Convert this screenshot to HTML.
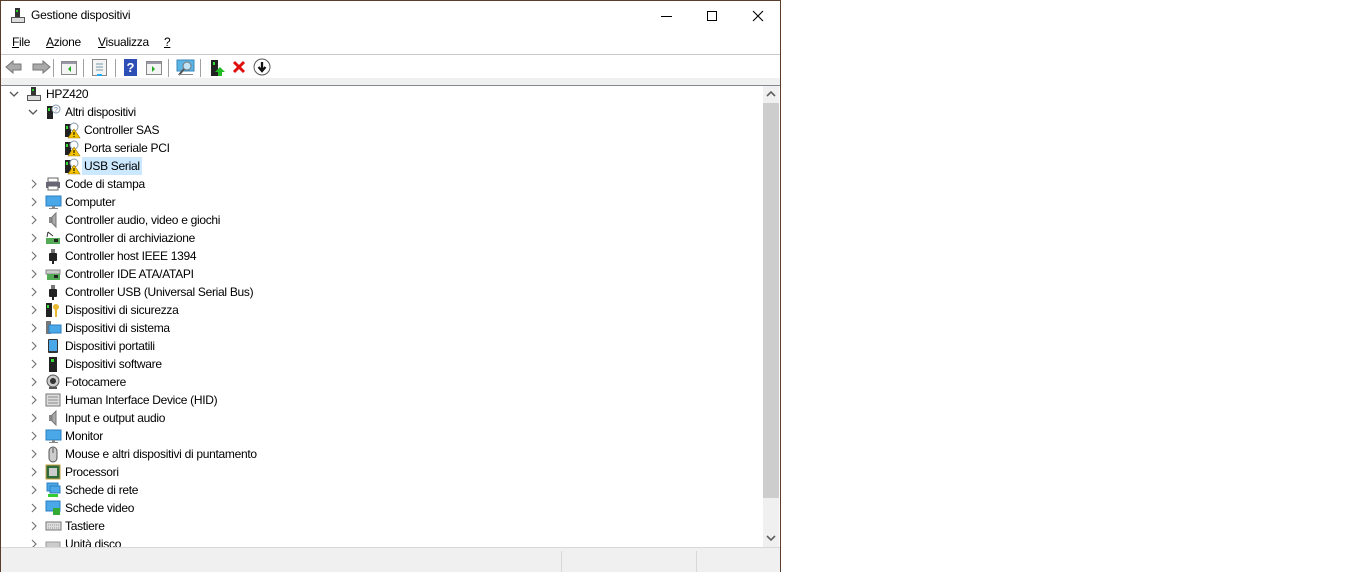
<!DOCTYPE html>
<html><head><meta charset="utf-8"><style>
*{margin:0;padding:0;box-sizing:border-box}
body{width:1365px;height:572px;background:#fff;position:relative;overflow:hidden;font-family:"Liberation Sans",sans-serif;font-size:12px;color:#000}
#win{position:absolute;left:0;top:0;width:781px;height:572px;border:1px solid #5b3d2b;border-bottom:none;background:#fff;overflow:hidden}
.abs{position:absolute}
.menu span{position:absolute;top:34px;font-size:12px;letter-spacing:-0.3px}
.row{position:absolute;height:18px;line-height:18px;white-space:nowrap;letter-spacing:-0.3px}
.chev{position:absolute;top:0;color:#777;font-size:11px}
.sep{position:absolute;top:58px;width:1px;height:18px;background:#a0a0a0}
</style></head><body>
<div id="win">
 <svg class="abs" style="left:9px;top:6px" width="16" height="18"><rect x="5" y="1" width="5" height="9" fill="#333"/><rect x="6" y="3" width="2" height="2" fill="#2c2"/><rect x="1" y="10" width="14" height="6" fill="#555"/><rect x="2" y="11" width="12" height="4" fill="#ddd"/></svg>
 <div class="abs" style="left:30px;top:7px;font-size:12px;letter-spacing:-0.2px">Gestione dispositivi</div>
 <div class="abs" style="left:660px;top:15px;width:11px;height:1px;background:#000"></div>
 <div class="abs" style="left:706px;top:10px;width:10px;height:10px;border:1px solid #000"></div>
 <svg class="abs" style="left:751px;top:9px" width="12" height="12"><path d="M1 1L11 11M11 1L1 11" stroke="#000" stroke-width="1.1"/></svg>
 <div class="menu"><span style="left:11px"><u>F</u>ile</span><span style="left:45px"><u>A</u>zione</span><span style="left:97px"><u>V</u>isualizza</span><span style="left:163px"><u>?</u></span></div>
 <div class="abs" style="left:0;top:53px;width:780px;height:1px;background:#c8c8c8"></div>
 <svg class="abs" style="left:4px;top:58px" width="46" height="16"><path d="M1 8L8 2V5H16V11H8V14Z" fill="#aaa" stroke="#777"/><path d="M45 8L38 2V5H28V11H38V14Z" fill="#aaa" stroke="#777"/></svg>
 <div class="sep" style="left:52px"></div>
 <svg class="abs" style="left:60px;top:59px" width="17" height="16"><rect x=".5" y="1.5" width="15" height="13" fill="#f4f4f4" stroke="#888"/><rect x="1" y="2" width="14" height="2" fill="#99a"/><path d="M10 6L7 9L10 12Z" fill="#2a2"/></svg>
 <div class="sep" style="left:82px"></div>
 <svg class="abs" style="left:91px;top:58px" width="16" height="18"><rect x=".5" y=".5" width="14" height="16" fill="#f4f4f4" stroke="#888"/><path d="M4 5H11M4 8H11M4 11H11" stroke="#79a"/><rect x="5" y="15" width="5" height="2" fill="#2af"/></svg>
 <div class="sep" style="left:114px"></div>
 <div class="abs" style="left:123px;top:58px;width:13px;height:17px;background:#2d4fb5;color:#fff;font-weight:bold;font-size:13px;text-align:center;line-height:17px">?</div>
 <svg class="abs" style="left:145px;top:59px" width="17" height="16"><rect x=".5" y="1.5" width="15" height="13" fill="#f4f4f4" stroke="#888"/><rect x="1" y="2" width="14" height="2" fill="#99a"/><path d="M6 6L9 9L6 12Z" fill="#2a2"/></svg>
 <div class="sep" style="left:167px"></div>
 <svg class="abs" style="left:175px;top:58px" width="19" height="18"><rect x="1" y="1" width="17" height="11" fill="#5ab4e6" stroke="#3a86b8"/><circle cx="11" cy="7" r="4" fill="#bfe3f7" stroke="#777"/><path d="M8 10L3 16" stroke="#555" stroke-width="2"/><rect x="2" y="15" width="15" height="1" fill="#888"/></svg>
 <div class="sep" style="left:199px"></div>
 <svg class="abs" style="left:208px;top:58px" width="16" height="18"><rect x="2" y="1" width="7" height="16" fill="#222"/><rect x="4" y="3" width="2" height="3" fill="#3d3"/><path d="M11 8L16 13H13V17H9V13H6Z" fill="#2b2"/></svg>
 <svg class="abs" style="left:231px;top:59px" width="14" height="14"><path d="M2 2L12 12M12 2L2 12" stroke="#e01010" stroke-width="3"/></svg>
 <svg class="abs" style="left:252px;top:57px" width="18" height="18"><circle cx="9" cy="9" r="8" fill="#fff" stroke="#555"/><path d="M9 4V11M5.5 9L9 13L12.5 9" stroke="#111" stroke-width="2.3" fill="none"/></svg>
 <div class="abs" style="left:0;top:77px;width:780px;height:7px;background:#f0f0f0"></div>
 <div class="abs" style="left:0;top:84px;width:780px;height:1px;background:#828790"></div>
 <div class="abs" style="left:1px;top:85px;width:760px;height:461px;overflow:hidden" id="tree"></div>
 <div class="abs" style="left:762px;top:85px;width:16px;height:461px;background:#f0f0f0"></div>
 <div class="abs" style="left:762px;top:102px;width:16px;height:395px;background:#cdcdcd"></div>
 <svg class="abs" style="left:765px;top:89px" width="10" height="8"><path d="M1 6L5 2L9 6" stroke="#606060" stroke-width="1.6" fill="none"/></svg>
 <svg class="abs" style="left:765px;top:533px" width="10" height="8"><path d="M1 2L5 6L9 2" stroke="#606060" stroke-width="1.6" fill="none"/></svg>
 <div class="abs" style="left:778px;top:85px;width:2px;height:461px;background:#fff"></div>
 <div class="abs" style="left:0;top:546px;width:780px;height:26px;background:#f0f0f0;border-top:1px solid #d8d8d8"></div>
 <div class="abs" style="left:560px;top:550px;width:1px;height:22px;background:#d8d8d8"></div>
 <div class="abs" style="left:695px;top:550px;width:1px;height:22px;background:#d8d8d8"></div>
</div>
<script>
const I={
pc:'<rect x="5" y="1" width="5" height="8" fill="#333"/><rect x="6" y="3" width="2" height="2" fill="#2c2"/><rect x="1" y="9" width="14" height="6" fill="#555"/><rect x="2" y="10" width="12" height="4" fill="#ddd"/>',
unk:'<rect x="2" y="2" width="6" height="13" fill="#222"/><rect x="3" y="4" width="2" height="3" fill="#3d3"/><circle cx="11" cy="5" r="4" fill="#fff" stroke="#89a"/><text x="9" y="8" font-size="7" fill="#67a">?</text>',
warn:'<rect x="1" y="2" width="6" height="13" fill="#222"/><rect x="2" y="4" width="2" height="3" fill="#3d3"/><circle cx="10" cy="5" r="4" fill="#fff" stroke="#89a"/><path d="M10 7L16 16H4Z" fill="#f5c400" stroke="#a07800" stroke-width=".6"/><rect x="9.5" y="10" width="1" height="3" fill="#000"/><rect x="9.5" y="14" width="1" height="1" fill="#000"/>',
prn:'<rect x="3" y="2" width="10" height="4" fill="#fff" stroke="#666"/><rect x="1" y="6" width="14" height="6" fill="#667"/><rect x="3" y="10" width="10" height="4" fill="#fff" stroke="#666"/>',
mon:'<rect x="1" y="2" width="15" height="10" fill="#4aa8e8" stroke="#2a7fc0"/><rect x="7" y="12" width="3" height="2" fill="#888"/><rect x="4" y="14" width="9" height="1" fill="#888"/>',
spk:'<rect x="4" y="5" width="3" height="6" fill="#888"/><path d="M7 5L11 1V15L7 11Z" fill="#aaa" stroke="#777"/>',
stor:'<rect x="1" y="8" width="14" height="6" fill="#5a5"/><path d="M3 2L8 6M3 2L2 7" stroke="#333" fill="none"/><rect x="9" y="9" width="4" height="3" fill="#222"/>',
usb:'<rect x="6" y="1" width="4" height="5" fill="#777"/><rect x="4" y="5" width="8" height="8" rx="1" fill="#222"/><rect x="7" y="13" width="2" height="3" fill="#222"/>',
ide:'<rect x="1" y="4" width="14" height="4" fill="#ccc" stroke="#888"/><rect x="2" y="8" width="13" height="6" fill="#5a5"/><rect x="9" y="9" width="4" height="3" fill="#222"/>',
sec:'<rect x="1" y="1" width="6" height="14" fill="#222"/><rect x="2" y="3" width="2" height="3" fill="#3d3"/><circle cx="11" cy="5" r="3" fill="#e8b830"/><rect x="10" y="7" width="2" height="8" fill="#e8b830"/>',
sys:'<rect x="1" y="1" width="5" height="13" fill="#777"/><rect x="4" y="5" width="12" height="8" fill="#4aa8e8" stroke="#2a7fc0"/>',
port:'<rect x="3" y="1" width="10" height="14" rx="1" fill="#333"/><rect x="4" y="2" width="8" height="11" fill="#4aa8e8"/>',
sw:'<rect x="4" y="1" width="8" height="15" fill="#222"/><rect x="6" y="3" width="3" height="3" fill="#3d3"/>',
cam:'<circle cx="8" cy="7" r="6" fill="#ccc" stroke="#555"/><circle cx="8" cy="7" r="3" fill="#333"/><rect x="4" y="13" width="8" height="2" fill="#555"/>',
hid:'<rect x="1" y="2" width="14" height="12" fill="#ddd" stroke="#777"/><path d="M3 5H13M3 8H13M3 11H13" stroke="#888"/>',
mouse:'<rect x="4" y="1" width="8" height="15" rx="4" fill="#ccc" stroke="#555"/><path d="M8 2V7" stroke="#555"/>',
cpu:'<rect x="1" y="1" width="14" height="14" fill="#2e6b3a" stroke="#c8a040"/><rect x="4" y="4" width="8" height="8" fill="#ccc"/>',
net:'<rect x="2" y="1" width="11" height="8" fill="#4aa8e8" stroke="#2a7fc0"/><rect x="5" y="4" width="10" height="7" fill="#4aa8e8" stroke="#2a7fc0"/><rect x="3" y="12" width="10" height="3" fill="#3c3"/>',
vid:'<rect x="1" y="1" width="14" height="10" fill="#4aa8e8" stroke="#2a7fc0"/><rect x="8" y="8" width="7" height="7" fill="#3a3"/>',
kb:'<rect x="1" y="4" width="15" height="8" fill="#ddd" stroke="#777"/><path d="M3 7H14M3 10H14" stroke="#999" stroke-dasharray="1 1"/>',
disk:'<rect x="1" y="6" width="14" height="6" fill="#ccc" stroke="#999"/>'
};
const rows=[[0,1,'pc','HPZ420'],[1,1,'unk','Altri dispositivi'],[2,-1,'warn','Controller SAS'],[2,-1,'warn','Porta seriale PCI'],[2,-1,'warn','USB Serial',1],
[1,0,'prn','Code di stampa'],[1,0,'mon','Computer'],[1,0,'spk','Controller audio, video e giochi'],[1,0,'stor','Controller di archiviazione'],[1,0,'usb','Controller host IEEE 1394'],[1,0,'ide','Controller IDE ATA/ATAPI'],[1,0,'usb','Controller USB (Universal Serial Bus)'],[1,0,'sec','Dispositivi di sicurezza'],[1,0,'sys','Dispositivi di sistema'],[1,0,'port','Dispositivi portatili'],[1,0,'sw','Dispositivi software'],[1,0,'cam','Fotocamere'],[1,0,'hid','Human Interface Device (HID)'],[1,0,'spk','Input e output audio'],[1,0,'mon','Monitor'],[1,0,'mouse','Mouse e altri dispositivi di puntamento'],[1,0,'cpu','Processori'],[1,0,'net','Schede di rete'],[1,0,'vid','Schede video'],[1,0,'kb','Tastiere'],[1,0,'disk','Unità disco']];
let h='';
rows.forEach((r,i)=>{const top=i*18-1;const lv=r[0];const cx=[7,26,0][lv],ix=[24,43,62][lv],tx=[44,63,82][lv];
 if(r[1]==1)h+=`<svg class="abs" style="left:${cx}px;top:${top+5}px" width="10" height="8"><path d="M1 2L5 6L9 2" stroke="#555" stroke-width="1.3" fill="none"/></svg>`;
 if(r[1]==0)h+=`<svg class="abs" style="left:${cx+2}px;top:${top+4}px" width="8" height="10"><path d="M2 1L6 5L2 9" stroke="#777" stroke-width="1.2" fill="none"/></svg>`;
 h+=`<svg class="abs" style="left:${ix}px;top:${top+1}px" width="17" height="17">${I[r[2]]}</svg>`;
 h+=`<div class="row" style="left:${tx-2}px;top:${top}px;padding:0 2px;${r[4]?'background:#cce8ff':''}">${r[3]}</div>`;});
document.getElementById('tree').innerHTML=h;
</script>
</body></html>
